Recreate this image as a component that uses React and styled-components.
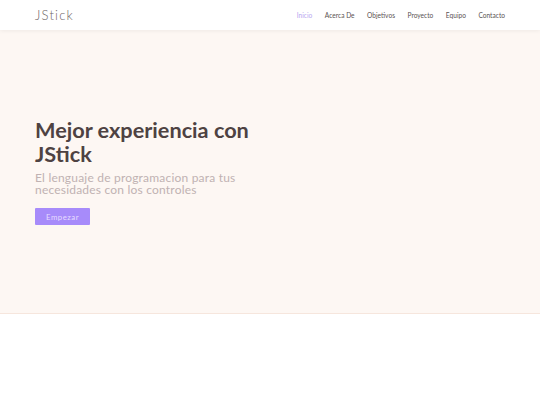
import React from "react";
import styled, { createGlobalStyle } from "styled-components";

const GlobalStyle = createGlobalStyle`
  * { box-sizing: border-box; }
  body {
    margin: 0;
    font-family: "Lato", "Open Sans", sans-serif;
    background: #ffffff;
  }
`;

const Navbar = styled.nav`
  height: 30px;
  background: #ffffff;
  display: flex;
  align-items: center;
  justify-content: space-between;
  padding: 0 35px;
  box-shadow: 0 1px 4px rgba(0, 0, 0, 0.06);
  position: relative;
  z-index: 1;
`;

const Logo = styled.div`
  font-family: "Lato", sans-serif;
  font-weight: 300;
  font-size: 13px;
  letter-spacing: 1.2px;
  color: #6d6464;
`;

const NavList = styled.ul`
  display: flex;
  gap: 12.5px;
  list-style: none;
  margin: 0;
  padding: 0;
`;

const NavItem = styled.li`
  font-size: 6.6px;
  color: ${(p) => (p.active ? "#b9a7f0" : "#5a5252")};
`;

const Hero = styled.section`
  height: 284px;
  background: #fdf7f3;
  border-bottom: 1px solid #f6e6dd;
  display: flex;
  flex-direction: column;
  justify-content: center;
  padding: 4px 35px 4px;
`;

const Title = styled.h1`
  margin: 0;
  font-family: "Lato", sans-serif;
  font-weight: 700;
  font-size: 21.7px;
  line-height: 24px;
  color: #4e4242;
  width: 230px;
`;

const Subtitle = styled.p`
  margin: 6px 0 0;
  font-size: 12px;
  line-height: 12px;
  font-weight: 400;
  letter-spacing: 0.2px;
  color: #c0b2b2;
  width: 240px;
`;

const Button = styled.button`
  margin-top: 12px;
  width: 55px;
  height: 17px;
  border: none;
  border-radius: 1px;
  background: #a78bfa;
  color: #e6dcff;
  font-family: "Lato", sans-serif;
  font-size: 7.8px;
  letter-spacing: 0.5px;
  padding: 0;
`;

const links = ["Inicio", "Acerca De", "Objetivos", "Proyecto", "Equipo", "Contacto"];

export default function App() {
  return (
    <>
      <GlobalStyle />
      <Navbar>
        <Logo>JStick</Logo>
        <NavList>
          {links.map((l, i) => (
            <NavItem key={l} active={i === 0}>
              {l}
            </NavItem>
          ))}
        </NavList>
      </Navbar>
      <Hero>
        <Title>Mejor experiencia con JStick</Title>
        <Subtitle>El lenguaje de programacion para tus necesidades con los controles</Subtitle>
        <Button>Empezar</Button>
      </Hero>
    </>
  );
}
